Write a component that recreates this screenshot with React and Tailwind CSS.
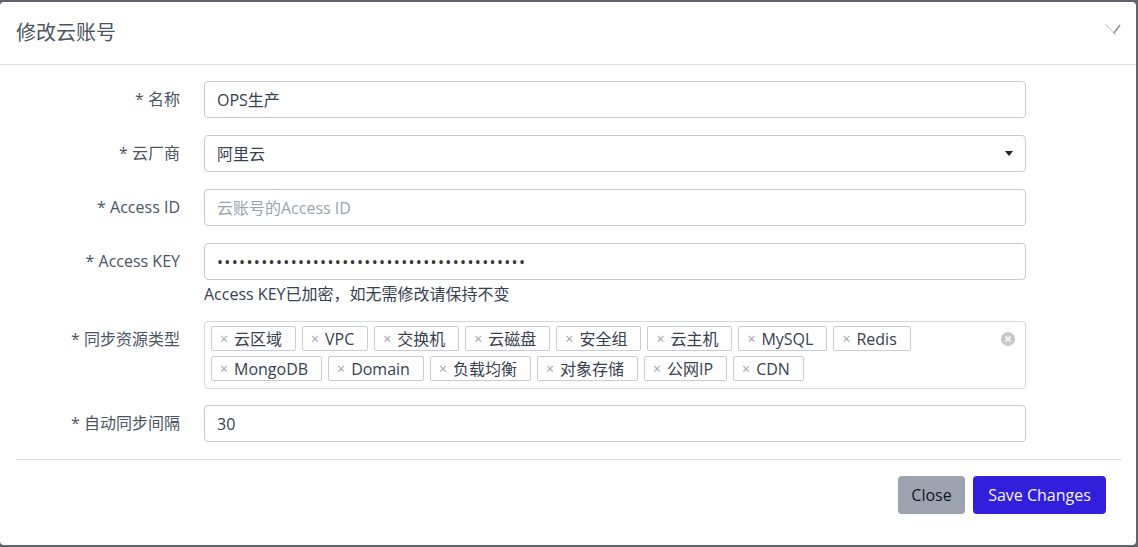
import React from "react";

const font = { fontFamily: '"Open Sans", "Noto Sans CJK SC", sans-serif' };

const tags = [
  ["云区域", "VPC", "交换机", "云磁盘", "安全组", "云主机", "MySQL", "Redis"],
  ["MongoDB", "Domain", "负载均衡", "对象存储", "公网IP", "CDN"],
];

const Row = ({ label, children, className = "" }) => (
  <div className={`flex ${className}`}>
    <label className="w-[180px] shrink-0 text-right text-[16px] text-[#4b5563] leading-[37px]">
      {label}
    </label>
    <div className="ml-[24px] w-[822px]">{children}</div>
  </div>
);

const boxCls =
  "h-[37px] w-full rounded-[4px] border border-[#c6cad2] bg-white px-[12px] text-[16px] flex items-center";

const Tag = ({ text }) => (
  <span className="flex h-[25px] items-center rounded-[2px] border border-[#c9ccd2] pl-[8px] pr-[13px] text-[16px] text-[#374151]">
    <span className="mr-[6px] text-[14px] text-[#9ca3af]">×</span>
    {text}
  </span>
);

export default function App() {
  return (
    <div className="h-screen w-full bg-[#62626c] pt-[2px] pr-[2px] pb-[2px]" style={font}>
      <div className="h-[543px] w-[1136px] rounded-[4px] bg-white">
        {/* header */}
        <div className="flex h-[63px] items-center justify-between border-b border-[#dde0e5] pl-[16px] pr-[14px]">
          <h1 className="text-[20px] text-[#4b5563]">修改云账号</h1>
          <svg width="18" height="14" viewBox="0 0 18 14" className="mt-[-6px]">
            <path d="M1 1 L12 12" stroke="#d0d3d8" strokeWidth="1.1" fill="none" />
            <path d="M10 10 L16 2" stroke="#8b919b" strokeWidth="1.6" fill="none" />
          </svg>
        </div>

        {/* body */}
        <div className="flex flex-col pt-[16px]">
          <Row label="* 名称">
            <div className={`${boxCls} text-[#374151]`}>OPS生产</div>
          </Row>
          <Row label="* 云厂商" className="mt-[17px]">
            <div className={`${boxCls} justify-between text-[#374151]`}>
              <span>阿里云</span>
              <svg width="8" height="6" viewBox="0 0 8 6">
                <path d="M0 0 L8 0 L4 5 Z" fill="#222" />
              </svg>
            </div>
          </Row>
          <Row label="* Access ID" className="mt-[17px]">
            <div className={`${boxCls} text-[#9ca3af]`}>云账号的Access ID</div>
          </Row>
          <Row label="* Access KEY" className="mt-[17px]">
            <div className={`${boxCls} tracking-[1.35px] text-[#333]`}>
              {"•".repeat(42)}
            </div>
            <div className="mt-[2px] text-[16px] text-[#374151] leading-[24px]">
              Access KEY已加密，如无需修改请保持不变
            </div>
          </Row>
          <Row label="* 同步资源类型" className="mt-[15px]">
            <div className="relative h-[68px] w-full rounded-[4px] border border-[#d4d7dc] pl-[6px] pt-[4px]">
              {tags.map((row, i) => (
                <div key={i} className={`flex gap-[6px] ${i ? "mt-[5px]" : ""}`}>
                  {row.map((t) => (
                    <Tag key={t} text={t} />
                  ))}
                </div>
              ))}
              <span className="absolute right-[10px] top-[10px] flex h-[14px] w-[14px] items-center justify-center rounded-full bg-[#c8c8c8]">
                <svg width="8" height="8" viewBox="0 0 8 8">
                  <path d="M1.5 1.5 L6.5 6.5 M6.5 1.5 L1.5 6.5" stroke="#fff" strokeWidth="1.6" />
                </svg>
              </span>
            </div>
          </Row>
          <Row label="* 自动同步间隔" className="mt-[16px]">
            <div className={`${boxCls} text-[#374151]`}>30</div>
          </Row>
        </div>

        {/* footer */}
        <div className="ml-[16px] mr-[14px] mt-[17px] border-t border-[#dde0e5]" />
        <div className="flex justify-end gap-[8px] pr-[30px] pt-[16px]">
          <button className="h-[38px] w-[67px] rounded-[4px] bg-[#9ca3af] text-[16px] text-[#111827]">
            Close
          </button>
          <button className="h-[38px] w-[133px] rounded-[4px] bg-[#311fdb] text-[16px] text-[#f3f4ff]">
            Save Changes
          </button>
        </div>
      </div>
    </div>
  );
}
